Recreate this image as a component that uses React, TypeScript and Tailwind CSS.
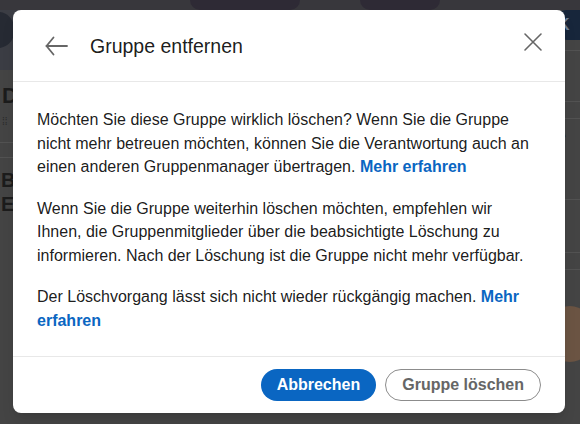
import { useState } from "react";

const FONT = { fontFamily: '"Liberation Sans", Arial, sans-serif' };

function BackdropPage() {
  return (
    <div className="flex h-[424px] w-[580px] flex-col bg-[#444444]">
      {/* Streifen oben (Titelbild) */}
      <div className="flex h-[10px] shrink-0 bg-[#38373c]">
        <div className="w-[190px]" />
        <div className="w-[110px] rounded-b-full bg-[#2e2a35]" />
        <div className="w-[60px]" />
        <div className="w-[80px] rounded-b-full bg-[#2e2a35]" />
      </div>

      <div className="flex flex-1">
        {/* linke Spalte */}
        <div className="flex w-[40px] flex-col overflow-hidden">
          <div className="h-[60px] bg-[#3b3d44] pt-[2px]">
            <div className="-ml-[18px] h-[36px] w-[32px] rounded-full bg-[#262a33]" />
          </div>
          <div className="pl-[2px] pt-[12px] text-[22px] font-bold leading-[28px] text-[#1c1c1c]">Di</div>
          <div className="pl-[2px] pt-[6px] text-[10px] leading-[12px] text-[#2a2a2a]">⁞⁞</div>
          <div className="mt-[14px] border-t border-[#525252]" />
          <div className="mt-[14px] border-t border-[#525252]" />
          <div className="pl-[1px] pt-[10px] text-[20px] font-bold leading-[24px] text-[#1c1c1c]">
            <div>Bi</div>
            <div>Er</div>
          </div>
        </div>

        <div className="flex-1" />

        {/* rechte Spalte */}
        <div className="flex w-[34px] flex-col overflow-hidden">
          <div className="ml-[6px] flex h-[30px] items-center rounded-l-[15px] bg-[#17263b] pl-[6px] text-[16px] font-semibold text-[#6f7f95]">
            K
          </div>
          <div className="mt-[10px] border-t border-[#525252]" />
          <div className="mt-[50px] border-t border-[#525252]" />
          <div className="mt-[16px] border-t border-[#525252]" />
          <div className="pt-[6px] text-[18px] leading-[22px] text-[#1c1c1c]">be</div>
          <div className="-ml-[3px] pt-[8px] text-[15px] leading-[20px] text-[#2e2e2e]">est</div>
          <div className="mt-[24px] border-t border-[#525252]" />
          <div className="mt-[52px] border-t border-[#525252]" />
          <div className="mt-[16px] border-t border-[#525252]" />
          <div className="pt-[6px] text-[18px] leading-[22px] text-[#1c1c1c]">dr</div>
          <div className="mt-[8px] ml-[2px] h-[56px] w-[44px] rounded-full bg-[#6b5443]" />
        </div>
      </div>
    </div>
  );
}

export default function App() {
  const [open, setOpen] = useState(true);

  return (
    <div className="relative h-[424px] w-[580px] overflow-hidden" style={FONT}>
      <BackdropPage />

      {open && (
        <div className="absolute left-[13px] top-[10px] w-[552px] rounded-[8px] bg-white text-[rgba(0,0,0,0.9)] shadow-lg">
          {/* Kopf */}
          <div className="flex h-[72px] items-center border-b border-[#e8e8e8] pl-[32px]">
            <button className="flex h-[24px] w-[24px] items-center justify-center">
              <svg width="24" height="24" viewBox="0 0 24 24" fill="none" stroke="#666" strokeWidth="1.8" strokeLinecap="round" strokeLinejoin="round">
                <path d="M22 12H1.5" />
                <path d="M8.5 3.5L1.5 12l7 8.5" />
              </svg>
            </button>
            <h2 className="ml-[21px] text-[19.5px] font-normal leading-[28px]">Gruppe entfernen</h2>
          </div>

          <button
            onClick={() => setOpen(false)}
            className="absolute right-[20px] top-[20px] flex h-[24px] w-[24px] items-center justify-center"
          >
            <svg width="24" height="24" viewBox="0 0 24 24" fill="none" stroke="#666" strokeWidth="1.6" strokeLinecap="round">
              <path d="M4 4l16 16M20 4L4 20" />
            </svg>
          </button>

          {/* Inhalt */}
          <div className="px-6 pb-6 pt-[26px] text-[16px] leading-[23.5px]">
            <p className="mb-[18px]">
              Möchten Sie diese Gruppe wirklich löschen? Wenn Sie die Gruppe nicht mehr betreuen möchten, können Sie die
              Verantwortung auch an einen anderen Gruppenmanager übertragen.{" "}
              <a className="font-bold text-[#0a66c2]">Mehr erfahren</a>
            </p>
            <p className="mb-[18px]">
              Wenn Sie die Gruppe weiterhin löschen möchten, empfehlen wir
              <br />
              Ihnen, die Gruppenmitglieder über die beabsichtigte Löschung zu
              <br />
              informieren. Nach der Löschung ist die Gruppe nicht mehr verfügbar.
            </p>
            <p>
              Der Löschvorgang lässt sich nicht wieder rückgängig machen.{" "}
              <a className="font-bold text-[#0a66c2]">Mehr erfahren</a>
            </p>
          </div>

          {/* Fuß */}
          <div className="flex items-center justify-end gap-[9px] border-t border-[#e8e8e8] px-6 py-3">
            <button
              onClick={() => setOpen(false)}
              className="h-[32px] rounded-full bg-[#0a66c2] px-4 text-[16px] font-bold text-white"
            >
              Abbrechen
            </button>
            <button className="h-[32px] rounded-full border border-[#8c8c8c] px-4 text-[16px] font-bold text-[#666]">
              Gruppe löschen
            </button>
          </div>
        </div>
      )}
    </div>
  );
}
